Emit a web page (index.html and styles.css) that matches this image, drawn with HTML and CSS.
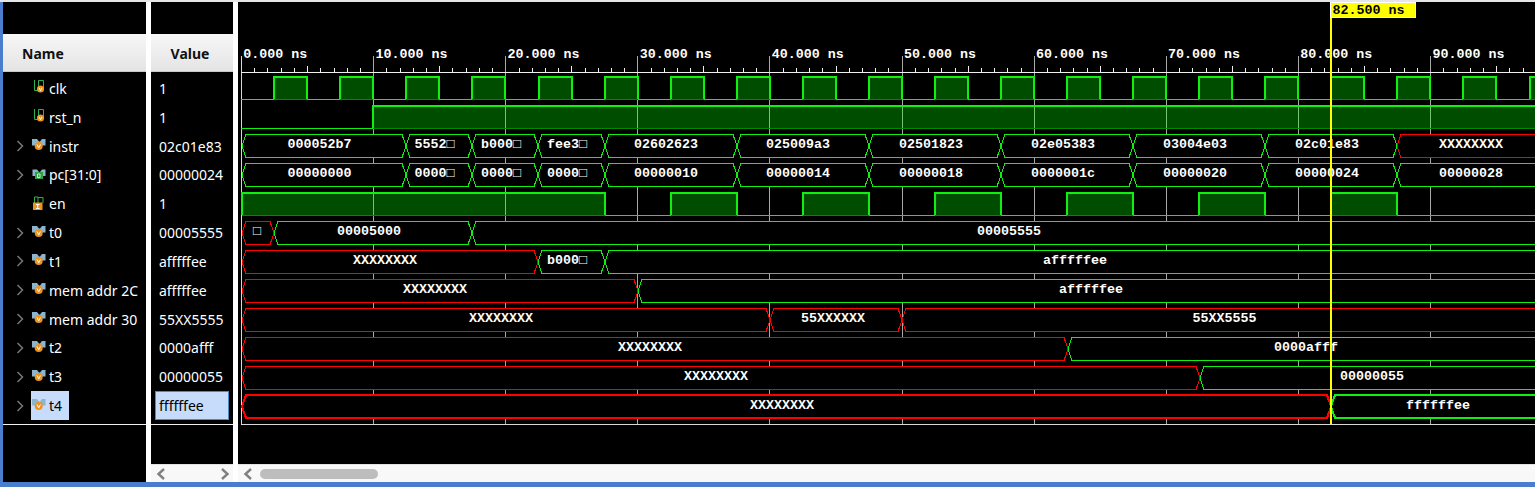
FILE: index.html
```html
<!DOCTYPE html>
<html lang="en">
<head>
<meta charset="utf-8">
<title>Waveform</title>
<link rel="stylesheet" href="styles.css">
</head>
<body>
<svg class="defs" width="0" height="0" aria-hidden="true">
  <defs>
    <symbol id="i-bit" viewBox="0 0 18 16">
      <path class="ic-wave" d="M3.5 0V10.5H7.5V.5H12.5V8"/>
      <circle class="ic-dot" cx="9.5" cy="9" r="3.6"/>
      <path class="ic-v" d="M8 7.7L9.5 10.7L11 7.7"/>
    </symbol>
    <symbol id="i-bus" viewBox="0 0 18 16">
      <path class="ic-wing" d="M1 1H6L8 3.5H9L11 1H14.5V7.5H1Z"/>
      <circle class="ic-dot" cx="7.7" cy="8" r="4"/>
      <path class="ic-v" d="M6 6.5L7.7 9.8L9.4 6.5"/>
    </symbol>
    <symbol id="i-bus-g" viewBox="0 0 18 16">
      <path class="ic-wing" d="M1.5 2.5H6L8 5H9L11 2.5H14.5V9H1.5Z"/>
      <rect class="ic-green" x="4" y="5" width="8" height="7"/>
      <path class="ic-z" d="M6.5 7H9V10.5H6.5Z"/>
    </symbol>
    <symbol id="i-en" viewBox="0 0 18 16">
      <path class="ic-wave" d="M3.5 7V1H7V7M7 1.5H12V7"/>
      <rect class="ic-dot" x="2" y="6.5" width="9.5" height="7.5"/>
      <path class="ic-i" d="M5 8.5H8.5M6.7 8.5V12.5M5 12.5H8.5"/>
    </symbol>
    <symbol id="i-chev" viewBox="0 0 8 12">
      <path class="ic-chev" d="M1.5 1L6.5 6L1.5 11"/>
    </symbol>
    <symbol id="i-back" viewBox="0 0 10 12">
      <path class="ic-scroll" d="M8 1L2.5 6L8 11"/>
    </symbol>
    <symbol id="i-fwd" viewBox="0 0 10 12">
      <path class="ic-scroll" d="M2 1L7.5 6L2 11"/>
    </symbol>
  </defs>
</svg>

<div class="app">
  <div class="topstrip"></div>
  <div class="main">
    <section class="col col-name">
      <div class="col-spacer"></div>
      <header class="col-head head-name">Name</header>
      <div class="rows">
        <div class="row"><span class="arrow"></span><span class="sig"><svg class="icon"><use href="#i-bit"/></svg>clk</span></div>
        <div class="row"><span class="arrow"></span><span class="sig"><svg class="icon"><use href="#i-bit"/></svg>rst_n</span></div>
        <div class="row"><span class="arrow"><svg class="chev"><use href="#i-chev"/></svg></span><span class="sig"><svg class="icon"><use href="#i-bus"/></svg>instr</span></div>
        <div class="row"><span class="arrow"><svg class="chev"><use href="#i-chev"/></svg></span><span class="sig"><svg class="icon"><use href="#i-bus-g"/></svg>pc[31:0]</span></div>
        <div class="row"><span class="arrow"></span><span class="sig"><svg class="icon"><use href="#i-en"/></svg>en</span></div>
        <div class="row"><span class="arrow"><svg class="chev"><use href="#i-chev"/></svg></span><span class="sig"><svg class="icon"><use href="#i-bus"/></svg>t0</span></div>
        <div class="row"><span class="arrow"><svg class="chev"><use href="#i-chev"/></svg></span><span class="sig"><svg class="icon"><use href="#i-bus"/></svg>t1</span></div>
        <div class="row"><span class="arrow"><svg class="chev"><use href="#i-chev"/></svg></span><span class="sig"><svg class="icon"><use href="#i-bus"/></svg>mem addr 2C</span></div>
        <div class="row"><span class="arrow"><svg class="chev"><use href="#i-chev"/></svg></span><span class="sig"><svg class="icon"><use href="#i-bus"/></svg>mem addr 30</span></div>
        <div class="row"><span class="arrow"><svg class="chev"><use href="#i-chev"/></svg></span><span class="sig"><svg class="icon"><use href="#i-bus"/></svg>t2</span></div>
        <div class="row"><span class="arrow"><svg class="chev"><use href="#i-chev"/></svg></span><span class="sig"><svg class="icon"><use href="#i-bus"/></svg>t3</span></div>
        <div class="row"><span class="arrow"><svg class="chev"><use href="#i-chev"/></svg></span><span class="sig selected"><svg class="icon"><use href="#i-bus"/></svg>t4</span></div>
      </div>
    </section>

    <section class="col col-value">
      <div class="col-spacer"></div>
      <header class="col-head head-value">Value</header>
      <div class="rows">
        <div class="row"><span class="val">1</span></div>
        <div class="row"><span class="val">1</span></div>
        <div class="row"><span class="val">02c01e83</span></div>
        <div class="row"><span class="val">00000024</span></div>
        <div class="row"><span class="val">1</span></div>
        <div class="row"><span class="val">00005555</span></div>
        <div class="row"><span class="val">afffffee</span></div>
        <div class="row"><span class="val">afffffee</span></div>
        <div class="row"><span class="val">55XX5555</span></div>
        <div class="row"><span class="val">0000afff</span></div>
        <div class="row"><span class="val">00000055</span></div>
        <div class="row"><span class="val selected-val">ffffffee</span></div>
      </div>
      <div class="col-fill"></div>
      <div class="scrollbar scroll-value">
        <svg class="scroll-btn"><use href="#i-back"/></svg>
        <svg class="scroll-btn"><use href="#i-fwd"/></svg>
      </div>
    </section>

    <section class="col col-wave">
      <svg class="wave" viewBox="238 2 1297 462" width="1297" height="462" role="img" aria-label="Waveform">
        <!-- grid -->
        <path class="grid" d="M373.5 56V424M505.5 56V424M637.5 56V424M769.5 56V424M902 56V424M1034 56V424M1166 56V424M1298.5 56V424M1430.5 56V424"/>
        <path class="frame" d="M241.5 56V424.5H1535"/>

        <!-- ruler -->
        <path class="ruler" d="M241 72.5H1535"/>
        <path class="ruler" d="M254.5 68v4M267.5 68v4M281 68v4M294 68v4M307.5 66v6M320.5 68v4M334 68v4M347 68v4M360 68v4M386.5 68v4M400 68v4M413 68v4M426.5 68v4M439.5 66v6M452.5 68v4M466 68v4M479 68v4M492.5 68v4M519 68v4M532 68v4M545 68v4M558.5 68v4M571.5 66v6M585 68v4M598 68v4M611 68v4M624.5 68v4M651 68v4M664 68v4M677.5 68v4M690.5 68v4M703.5 66v6M717 68v4M730 68v4M743.5 68v4M756.5 68v4M783 68v4M796 68v4M809.5 68v4M822.5 68v4M836 66v6M849 68v4M862.5 68v4M875.5 68v4M888.5 68v4M915 68v4M928.5 68v4M941.5 68v4M955 68v4M968 66v6M981 68v4M994.5 68v4M1007.5 68v4M1021 68v4M1047 68v4M1060.5 68v4M1073.5 68v4M1087 68v4M1100 66v6M1113.5 68v4M1126.5 68v4M1139.5 68v4M1153 68v4M1179.5 68v4M1192.5 68v4M1206 68v4M1219 68v4M1232 66v6M1245.5 68v4M1258.5 68v4M1272 68v4M1285 68v4M1311.5 68v4M1324.5 68v4M1338 68v4M1351 68v4M1364.5 66v6M1377.5 68v4M1390.5 68v4M1404 68v4M1417 68v4M1443.5 68v4M1457 68v4M1470 68v4M1483 68v4M1496.5 66v6M1509.5 68v4M1523 68v4"/>
        <g class="label">
          <text x="243.3" y="58">0.000 ns</text>
          <text x="375.4" y="58">10.000 ns</text>
          <text x="507.5" y="58">20.000 ns</text>
          <text x="639.7" y="58">30.000 ns</text>
          <text x="771.8" y="58">40.000 ns</text>
          <text x="903.9" y="58">50.000 ns</text>
          <text x="1036" y="58">60.000 ns</text>
          <text x="1168" y="58">70.000 ns</text>
          <text x="1300.3" y="58">80.000 ns</text>
          <text x="1432.4" y="58">90.000 ns</text>
        </g>

        <!-- clk -->
        <path class="lvl-fill" d="M274 77h33v22h-33zM340 77h33v22h-33zM406 77h33v22h-33zM472 77h33v22h-33zM539 77h33v22h-33zM605 77h33v22h-33zM671 77h33v22h-33zM737 77h33v22h-33zM803 77h33v22h-33zM869 77h33v22h-33zM935 77h33v22h-33zM1001 77h33v22h-33zM1067 77h33v22h-33zM1133 77h33v22h-33zM1199 77h33v22h-33zM1265 77h33v22h-33zM1331 77h33v22h-33zM1397 77h33v22h-33zM1463 77h33v22h-33zM1530 77h6v22h-6z"/>
        <path class="lvl-low" d="M241 99.5H1535"/>
        <path class="lvl-base" d="M274 99.5h33M340 99.5h33M406 99.5h33M472 99.5h33M539 99.5h33M605 99.5h33M671 99.5h33M737 99.5h33M803 99.5h33M869 99.5h33M935 99.5h33M1001 99.5h33M1067 99.5h33M1133 99.5h33M1199 99.5h33M1265 99.5h33M1331 99.5h33M1397 99.5h33M1463 99.5h33M1530 99.5h6"/>
        <path class="lvl-edge" d="M274 99V77h33v22M340 99V77h33v22M406 99V77h33v22M472 99V77h33v22M539 99V77h33v22M605 99V77h33v22M671 99V77h33v22M737 99V77h33v22M803 99V77h33v22M869 99V77h33v22M935 99V77h33v22M1001 99V77h33v22M1067 99V77h33v22M1133 99V77h33v22M1199 99V77h33v22M1265 99V77h33v22M1331 99V77h33v22M1397 99V77h33v22M1463 99V77h33v22M1530 99V77h6"/>

        <!-- rst_n -->
        <path class="lvl-fill" d="M373 106H1536V128H373z"/>
        <path class="lvl-low" d="M241 128.5H373"/>
        <path class="lvl-base" d="M373 128.5H1535"/>
        <path class="lvl-edge" d="M373 128V106H1536"/>

        <!-- instr -->
        <g class="bus" transform="translate(0 134)">
          <path class="ok" d="M242 12L246 .5H402L406 12L402 23.5H246Z"/><text x="319.5" y="13.5">000052b7</text>
          <path class="ok" d="M406 12L410 .5H468L472 12L468 23.5H410Z"/><text x="434.5" y="13.5">5552□</text>
          <path class="ok" d="M472 12L476 .5H534L538 12L534 23.5H476Z"/><text x="501" y="13.5">b000□</text>
          <path class="ok" d="M538 12L542 .5H601L605 12L601 23.5H542Z"/><text x="567" y="13.5">fee3□</text>
          <path class="ok" d="M605 12L609 .5H733L737 12L733 23.5H609Z"/><text x="666" y="13.5">02602623</text>
          <path class="ok" d="M737 12L741 .5H865L869 12L865 23.5H741Z"/><text x="798" y="13.5">025009a3</text>
          <path class="ok" d="M869 12L873 .5H997L1001 12L997 23.5H873Z"/><text x="931" y="13.5">02501823</text>
          <path class="ok" d="M1001 12L1005 .5H1129L1133 12L1129 23.5H1005Z"/><text x="1063" y="13.5">02e05383</text>
          <path class="ok" d="M1133 12L1137 .5H1261L1265 12L1261 23.5H1137Z"/><text x="1195" y="13.5">03004e03</text>
          <path class="ok" d="M1265 12L1269 .5H1393L1397 12L1393 23.5H1269Z"/><text x="1327" y="13.5">02c01e83</text>
          <path class="bad" d="M1397 12L1401 .5H1537V23.5H1401Z"/><text x="1471" y="13.5">XXXXXXXX</text>
        </g>

        <!-- pc -->
        <g class="bus" transform="translate(0 163)">
          <path class="ok" d="M242 12L246 .5H402L406 12L402 23.5H246Z"/><text x="319.5" y="13.5">00000000</text>
          <path class="ok" d="M406 12L410 .5H468L472 12L468 23.5H410Z"/><text x="434.5" y="13.5">0000□</text>
          <path class="ok" d="M472 12L476 .5H534L538 12L534 23.5H476Z"/><text x="501" y="13.5">0000□</text>
          <path class="ok" d="M538 12L542 .5H601L605 12L601 23.5H542Z"/><text x="567" y="13.5">0000□</text>
          <path class="ok" d="M605 12L609 .5H733L737 12L733 23.5H609Z"/><text x="666" y="13.5">00000010</text>
          <path class="ok" d="M737 12L741 .5H865L869 12L865 23.5H741Z"/><text x="798" y="13.5">00000014</text>
          <path class="ok" d="M869 12L873 .5H997L1001 12L997 23.5H873Z"/><text x="931" y="13.5">00000018</text>
          <path class="ok" d="M1001 12L1005 .5H1129L1133 12L1129 23.5H1005Z"/><text x="1063" y="13.5">0000001c</text>
          <path class="ok" d="M1133 12L1137 .5H1261L1265 12L1261 23.5H1137Z"/><text x="1195" y="13.5">00000020</text>
          <path class="ok" d="M1265 12L1269 .5H1393L1397 12L1393 23.5H1269Z"/><text x="1327" y="13.5">00000024</text>
          <path class="ok" d="M1397 12L1401 .5H1537V23.5H1401Z"/><text x="1471" y="13.5">00000028</text>
        </g>

        <!-- en -->
        <path class="lvl-fill" d="M242 193H605V215H242zM671 193h66v22h-66zM803 193h66v22h-66zM935 193h66v22h-66zM1067 193h66v22h-66zM1199 193h66v22h-66zM1331 193h66v22h-66z"/>
        <path class="lvl-low" d="M242 215.5H1535"/>
        <path class="lvl-base" d="M242 215.5H605M671 215.5h66M803 215.5h66M935 215.5h66M1067 215.5h66M1199 215.5h66M1331 215.5h66"/>
        <path class="lvl-edge" d="M242 215V193H605V215M671 215V193h66v22M803 215V193h66v22M935 215V193h66v22M1067 215V193h66v22M1199 215V193h66v22M1331 215V193h66v22"/>

        <!-- t0 -->
        <g class="bus" transform="translate(0 221)">
          <path class="bad" d="M242 12L246 .5H270L274 12L270 23.5H246Z"/><text x="257" y="13.5">□</text>
          <path class="ok" d="M274 12L278 .5H468L472 12L468 23.5H278Z"/><text x="369" y="13.5">00005000</text>
          <path class="ok" d="M472 12L476 .5H1537V23.5H476Z"/><text x="1009" y="13.5">00005555</text>
        </g>
        <!-- t1 -->
        <g class="bus" transform="translate(0 250)">
          <path class="bad" d="M242 12L246 .5H534L538 12L534 23.5H246Z"/><text x="385" y="13.5">XXXXXXXX</text>
          <path class="ok" d="M538 12L542 .5H601L605 12L601 23.5H542Z"/><text x="567" y="13.5">b000□</text>
          <path class="ok" d="M605 12L609 .5H1537V23.5H609Z"/><text x="1075" y="13.5">afffffee</text>
        </g>
        <!-- mem addr 2C -->
        <g class="bus" transform="translate(0 279)">
          <path class="bad" d="M242 12L246 .5H634L638 12L634 23.5H246Z"/><text x="435" y="13.5">XXXXXXXX</text>
          <path class="ok" d="M638 12L642 .5H1537V23.5H642Z"/><text x="1091" y="13.5">afffffee</text>
        </g>
        <!-- mem addr 30 -->
        <g class="bus" transform="translate(0 308)">
          <path class="bad" d="M242 12L246 .5H766L770 12L766 23.5H246Z"/><text x="501" y="13.5">XXXXXXXX</text>
          <path class="bad" d="M770 12L774 .5H898L902 12L898 23.5H774Z"/><text x="833" y="13.5">55XXXXXX</text>
          <path class="bad" d="M902 12L906 .5H1537V23.5H906Z"/><text x="1224.5" y="13.5">55XX5555</text>
        </g>
        <!-- t2 -->
        <g class="bus" transform="translate(0 337)">
          <path class="bad" d="M242 12L246 .5H1064L1068 12L1064 23.5H246Z"/><text x="650" y="13.5">XXXXXXXX</text>
          <path class="ok" d="M1068 12L1072 .5H1537V23.5H1072Z"/><text x="1306" y="13.5">0000afff</text>
        </g>
        <!-- t3 -->
        <g class="bus" transform="translate(0 366)">
          <path class="bad" d="M242 12L246 .5H1196L1200 12L1196 23.5H246Z"/><text x="716" y="13.5">XXXXXXXX</text>
          <path class="ok" d="M1200 12L1204 .5H1537V23.5H1204Z"/><text x="1372" y="13.5">00000055</text>
        </g>
        <!-- t4 -->
        <g class="bus sel" transform="translate(0 394.5)">
          <path class="bad" d="M242 12L246 .5H1327L1331 12L1327 23.5H246Z"/><text x="782" y="14.5">XXXXXXXX</text>
          <path class="ok" d="M1331 12L1335 .5H1538V23.5H1335Z"/><text x="1438" y="14.5">ffffffee</text>
        </g>

        <!-- cursor -->
        <rect class="cursor" x="1330" y="2" width="2" height="422"/>
        <rect class="flag" x="1330.5" y="2.5" width="85" height="15"/>
        <text class="flag-text" x="1332.5" y="14">82.500 ns</text>
      </svg>
      <div class="scrollbar scroll-wave">
        <svg class="scroll-btn"><use href="#i-back"/></svg>
        <div class="thumb"></div>
      </div>
    </section>
  </div>
  <div class="bottomstrip"></div>
</div>
</body>
</html>
```
FILE: styles.css
```css
* { box-sizing: border-box; }
html, body { margin: 0; padding: 0; background: #fff; }
body { font-family: "Noto Sans", "Open Sans", sans-serif; overflow: hidden; }
.defs { display: block; height: 0; }

.app {
  width: 1535px;
  height: 487px;
  display: flex;
  flex-direction: column;
  border-left: 3px solid #4a7dcb;
}
.topstrip { height: 2px; background: #e6e6e6; margin-left: -3px; }
.bottomstrip { height: 5px; background: #4a7dcb; }
.main { flex: 1; display: flex; min-height: 0; background: #fff; }

.col { display: flex; flex-direction: column; background: #000; }
.col-name { width: 143px; margin-right: 5px; }
.col-value { width: 82px; margin-right: 5px; }
.col-wave { flex: 1; min-width: 0; background: #fff; }

.col-spacer { height: 32px; }
.col-head {
  height: 38px;
  display: flex;
  align-items: center;
  padding-top: 1px;
  font-size: 14px;
  font-weight: 700;
  color: #111;
  background: linear-gradient(#f7f7f7, #e4e4e4);
  border-bottom: 1px solid #c9c9c9;
}
.head-name { padding-left: 19px; }
.head-value { justify-content: center; padding-right: 4px; }

.rows {
  height: 353px;
  padding-top: 2px;
  display: grid;
  grid-template-rows: repeat(12, 28.83px);
  align-content: start;
  border-bottom: 1px solid #f0f0f0;
}
.row {
  display: flex;
  align-items: stretch;
  font-size: 14px;
  color: #fff;
  white-space: nowrap;
}
.arrow { width: 28px; padding-left: 13px; display: flex; align-items: center; }
.chev { width: 8px; height: 12px; }
.sig { display: flex; align-items: center; padding-right: 7px; }
.sig.selected { background: #c7dcfa; color: #000; }
.icon { width: 18px; height: 16px; }

.val { display: flex; align-items: center; flex: 1; margin: 0 4px; padding-left: 3px; border: 1px solid transparent; }
.selected-val { background: #c7dcfa; color: #000; border-color: #4a8cc4; }

.col-fill { flex: 1; }

.scrollbar {
  height: 18px;
  background: #f8f8f8;
  border-top: 1px solid #e2e2e2;
  display: flex;
  align-items: center;
}
.scroll-value { justify-content: space-between; padding: 0 3px 0 5px; }
.scroll-wave { padding-left: 5px; gap: 7px; }
.scroll-btn { width: 10px; height: 12px; }
.thumb { width: 118px; height: 10px; border-radius: 5px; background: #bdbdbd; }

.wave { display: block; background: #000; }
.wave path, .wave rect { shape-rendering: crispEdges; }
.wave text {
  font-family: "Liberation Mono", "DejaVu Sans Mono", monospace;
  font-size: 13.33px;
  font-weight: 700;
  fill: #fff;
}
.grid { stroke: #a8a8a8; stroke-width: 1; fill: none; }
.frame { stroke: #d8d8d8; stroke-width: 1; fill: none; }
.ruler { stroke: #f0f0f0; stroke-width: 1; fill: none; }

.lvl-fill { fill: rgba(0, 255, 0, 0.3); }
.lvl-low { stroke: #10f010; stroke-width: 1; fill: none; }
.lvl-base { stroke: #008a00; stroke-width: 1; fill: none; }
.lvl-edge { stroke: #10f010; stroke-width: 2; fill: none; }

.bus path { fill: #000; stroke-width: 1; }
.bus text { text-anchor: middle; }
.bus .ok { stroke: #10f010; }
.bus .bad { stroke: #ff0000; }
.bus.sel path { stroke-width: 2; }

.cursor { fill: #ffff00; }
.flag { fill: #ffff00; stroke: #fff; stroke-width: 1; }
.wave .flag-text { fill: #000; }

.ic-wave { fill: none; stroke: #2fb050; stroke-width: 1; }
.ic-dot { fill: #ee9320; }
.ic-v { fill: none; stroke: #fff; stroke-width: 1; }
.ic-i { fill: none; stroke: #fff; stroke-width: 1; }
.ic-wing { fill: #8db4cd; }
.ic-green { fill: #2f9e44; }
.ic-z { fill: none; stroke: #bff0c0; stroke-width: 1; }
.ic-chev { fill: none; stroke: #777; stroke-width: 1.5; }
.ic-scroll { fill: none; stroke: #808080; stroke-width: 2.4; }
```
